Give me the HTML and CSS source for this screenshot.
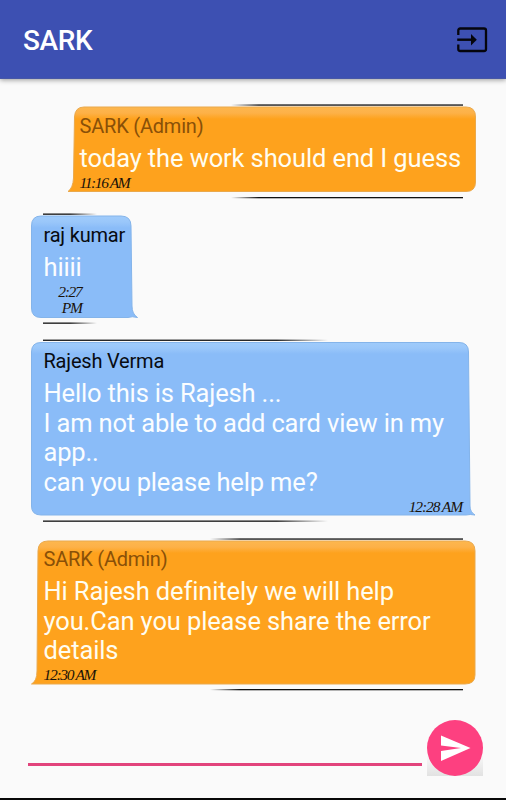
FILE: index.html
```html
<!DOCTYPE html>
<html lang="en">
<head>
<meta charset="utf-8">
<title>SARK</title>
<link rel="stylesheet" href="styles.css">
</head>
<body>
<svg class="defs" width="0" height="0" aria-hidden="true">
  <defs>
    <linearGradient id="orange" gradientUnits="userSpaceOnUse" x1="0" y1="3" x2="0" y2="15"><stop offset="0" stop-color="#fdb74e"/><stop offset=".5" stop-color="#fdb148"/><stop offset="1" stop-color="#fea21d"/></linearGradient>
    <linearGradient id="blue" gradientUnits="userSpaceOnUse" x1="0" y1="3" x2="0" y2="15"><stop offset="0" stop-color="#9fcbfb"/><stop offset=".5" stop-color="#9ac7fa"/><stop offset="1" stop-color="#8abcf8"/></linearGradient>
    <linearGradient id="fadeIn"><stop offset="0" stop-color="#111" stop-opacity="0"/><stop offset=".12" stop-color="#111"/></linearGradient>
    <linearGradient id="fadeOut"><stop offset=".82" stop-color="#111"/><stop offset="1" stop-color="#111" stop-opacity="0"/></linearGradient>
    <linearGradient id="fadeShort"><stop offset=".5" stop-color="#111"/><stop offset="1" stop-color="#111" stop-opacity="0"/></linearGradient>
  </defs>
</svg>
<div class="screen">
  <header class="bar">
    <h1 class="title">SARK</h1>
    <svg class="exit" viewBox="0 0 32 26"><path d="M2.300 8V3.500Q2.300 1.500 4.300 1.500H28Q30 1.500 30 3.500V22Q30 24 28 24H4.300Q2.300 24 2.300 22V17.500" fill="none" stroke="#05050c" stroke-width="2.300"/><path d="M1.200 12.700H16" stroke="#05050c" stroke-width="2.400"/><path d="M15 7L20.800 12.700L15 18.400Z" fill="#05050c"/></svg>
  </header>
  <main class="chat">
    <article class="msg admin first">
      <svg class="shape" viewBox="0 0 412 95"><rect x="165" y=".4" width="232" height="1.300" fill="url(#fadeIn)"/><path d="M18 3H400Q409.500 3 409.500 13V78Q409.500 87.500 400 87.500H2Q7 84 7.500 74L8.500 13Q9 3 18 3Z" fill="url(#orange)" stroke="#eaa94c"/><rect x="165" y="93" width="232" height="1.300" fill="url(#fadeIn)"/></svg>
      <div class="name">SARK (Admin)</div>
      <p class="text">today the work should end I guess</p>
      <time class="time">11:16 AM</time>
    </article>
    <article class="msg user short">
      <svg class="shape" viewBox="0 0 109 112"><rect x="13" y=".5" width="54" height="1.300" fill="url(#fadeShort)"/><path d="M11 3H91Q101 3 101 13L102 93Q102 101 107.500 104.500Q102 103 98 104.500H11Q1.500 104.500 1.500 95V13Q1.500 3 11 3Z" fill="url(#blue)" stroke="#84b4ea"/><rect x="13" y="109.500" width="54" height="1.300" fill="url(#fadeShort)"/></svg>
      <div class="name">raj kumar</div>
      <p class="text">hiiii</p>
      <time class="time">2:27<br>PM</time>
    </article>
    <article class="msg user long">
      <svg class="shape" viewBox="0 0 446 184"><rect x="13" y=".6" width="285" height="1.300" fill="url(#fadeOut)"/><path d="M11 3.500H429Q438.500 3.500 438.500 13L440 167Q440 173 445 176Q440 175 436 176H11Q1.500 176 1.500 167V13Q1.500 3.500 11 3.500Z" fill="url(#blue)" stroke="#84b4ea"/><rect x="13" y="181.500" width="285" height="1.300" fill="url(#fadeOut)"/></svg>
      <div class="name">Rajesh Verma</div>
      <p class="text">Hello this is Rajesh ...<br>I am not able to add card view in my<br>app..<br>can you please help me?</p>
      <time class="time">12:28 AM</time>
    </article>
    <article class="msg admin last">
      <svg class="shape" viewBox="0 0 448 153"><rect x="180" y=".4" width="253" height="1.300" fill="url(#fadeIn)"/><path d="M18 3H435Q445 3 445 13V137Q445 146 435 146H1.500Q7 143 7 133L8 13Q8 3 18 3Z" fill="url(#orange)" stroke="#eaa94c"/><rect x="180" y="151" width="253" height="1.300" fill="url(#fadeIn)"/></svg>
      <div class="name">SARK (Admin)</div>
      <p class="text">Hi Rajesh definitely we will help<br>you.Can you please share the error<br>details</p>
      <time class="time">12:30 AM</time>
    </article>
  </main>
  <footer class="composer">
    <div class="field"></div>
    <div class="send"><svg viewBox="0 0 56 56"><circle cx="28" cy="28" r="28" fill="#fd4080"/><path d="M14 15.500L43.500 28L14 41V31L34 28L14 25.500Z" fill="#fff"/></svg></div>
  </footer>
</div>
</body>
</html>
```
FILE: styles.css
```css
* { box-sizing: border-box; }
body { margin: 0; background: #fafafa; font-family: Roboto, sans-serif; }
.defs { position: absolute; }
.screen { height: 800px; display: flex; flex-direction: column; overflow: hidden; border-bottom: 2px solid #080808; }
.bar { flex: none; height: 79px; padding: 0 18px 0 23px; display: flex; align-items: center; justify-content: space-between; background: #3d50b2; border-bottom: 1px solid #4757a6; box-shadow: 0 1px 5px rgba(0,0,0,.4); }
.title { margin: 4px 0 0; font-size: 28px; font-weight: 500; line-height: 34px; color: #fff; letter-spacing: -.4px; }
.exit { width: 32px; height: 26px; margin-top: 1px; }
.chat { flex: none; height: 612px; padding: 25px 28px 0 30px; display: flex; flex-direction: column; }
.msg { position: relative; flex: none; display: flex; flex-direction: column; align-items: flex-start; padding: 10px 14px 0 13.5px; white-space: nowrap; }
.shape { position: absolute; inset: 0; width: 100%; height: 100%; z-index: -1; }
.first { width: 412px; height: 95px; align-self: flex-end; }
.short { width: 109px; height: 112px; margin-top: 14px; }
.long { width: 446px; height: 184px; margin-top: 14px; }
.last { width: 448px; height: 153px; margin-top: 15px; padding-top: 9px; }
.name { font-size: 20px; line-height: 24px; letter-spacing: -.2px; color: #080b10; }
.admin .name { color: #895008; }
.text { margin: 6px 0 0; font-size: 25.5px; line-height: 29.5px; letter-spacing: -.12px; color: #fffdf0; }
.user .text { color: #fafdff; letter-spacing: -.16px; }
.time { font: italic 15.5px/18px "Liberation Serif", serif; letter-spacing: -1.3px; color: #1a1208; }
.first .time { letter-spacing: -1.4px; }
.short .time { width: 38px; margin-top: 1px; line-height: 16.5px; text-align: right; }
.long .time { align-self: flex-end; margin-top: 1px; letter-spacing: -1.1px; }
.composer { flex: 1; display: flex; align-items: flex-start; padding: 29px 23px 0 28px; }
.field { flex: 1; height: 46px; margin-right: 5px; border-bottom: 3px solid #e2447c; }
.send { width: 56px; height: 56px; background: linear-gradient(#fafafa 60%, #e2e2e2); }
.send svg { display: block; width: 56px; height: 56px; }
```
